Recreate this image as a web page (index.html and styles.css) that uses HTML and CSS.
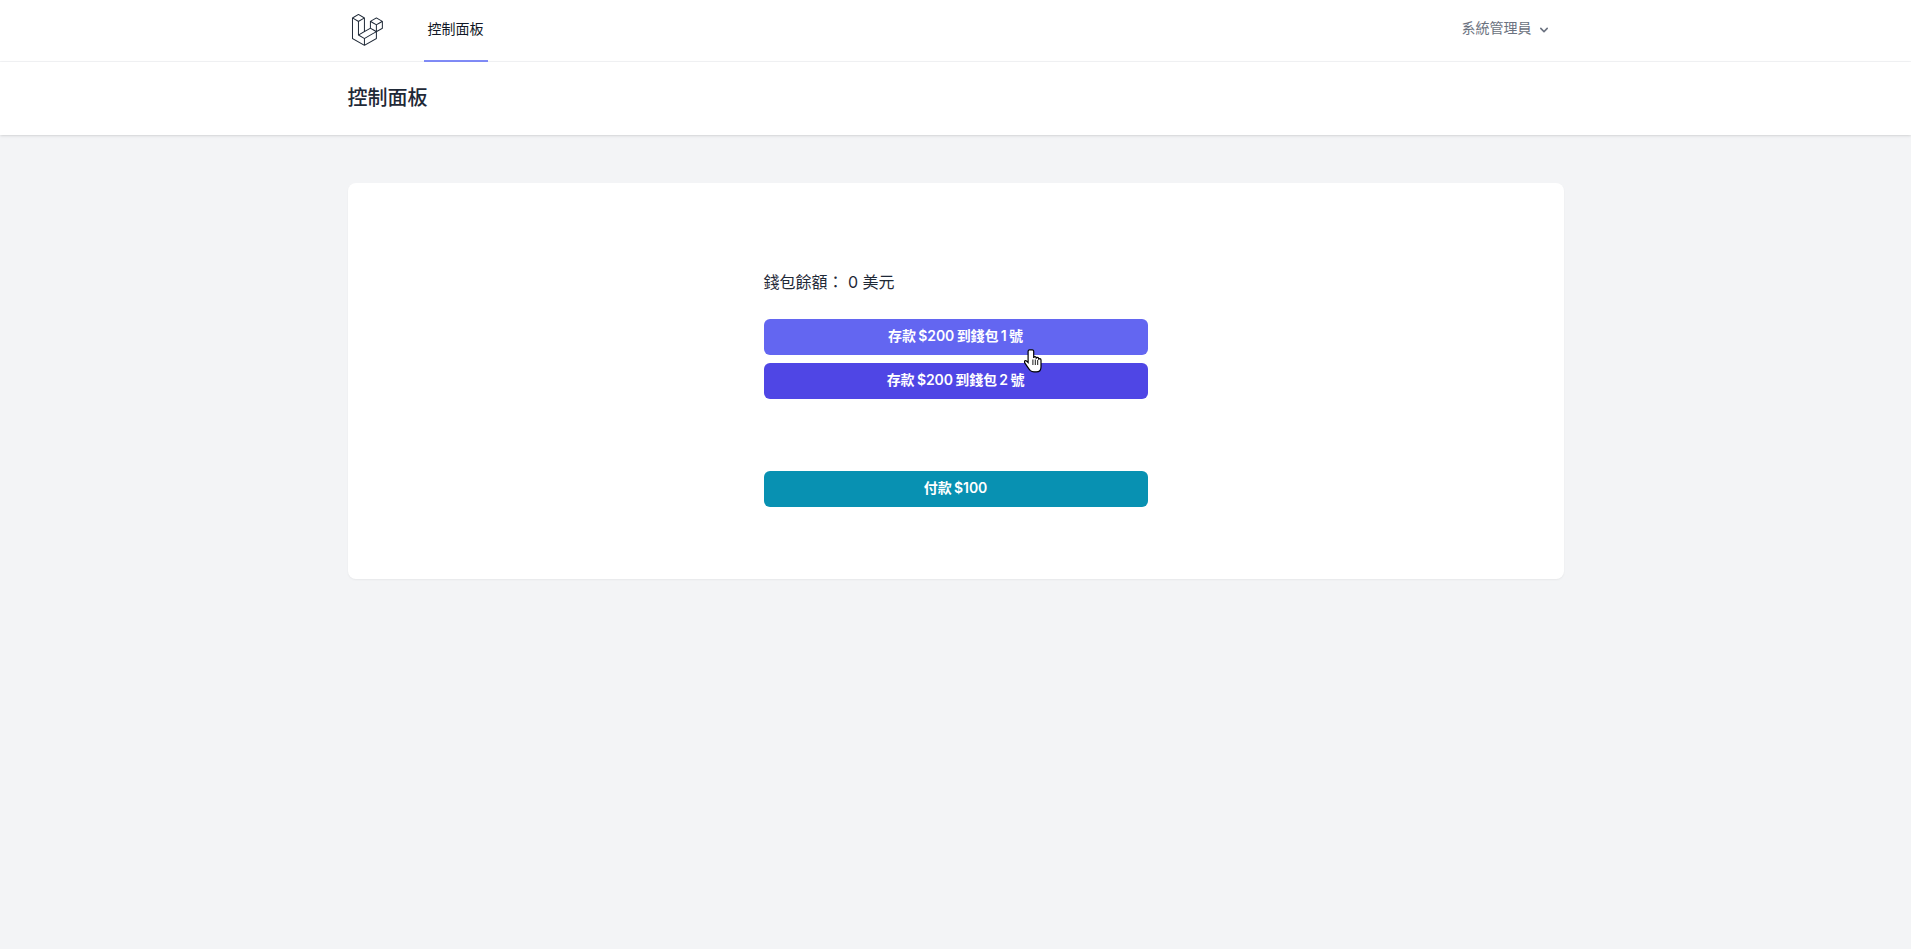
FILE: index.html
```html
<!DOCTYPE html>
<html lang="zh-Hant">
<head>
<meta charset="utf-8">
<title>控制面板</title>
<link rel="stylesheet" href="styles.css">
</head>
<body>
<div class="page">
  <nav class="nav">
    <div class="container nav-inner">
      <div class="nav-left">
        <svg class="logo" viewBox="0 0 316 316" xmlns="http://www.w3.org/2000/svg"><path d="M305.8 81.125C305.77 80.995 305.69 80.885 305.65 80.755C305.56 80.525 305.49 80.285 305.37 80.075C305.29 79.935 305.17 79.815 305.07 79.685C304.94 79.515 304.83 79.325 304.68 79.175C304.55 79.045 304.39 78.955 304.25 78.845C304.09 78.715 303.95 78.575 303.77 78.475L251.32 48.275C249.97 47.495 248.31 47.495 246.96 48.275L194.51 78.475C194.33 78.575 194.19 78.725 194.03 78.845C193.89 78.955 193.73 79.045 193.6 79.175C193.45 79.325 193.34 79.515 193.21 79.685C193.11 79.815 192.99 79.935 192.91 80.075C192.79 80.285 192.71 80.525 192.63 80.755C192.58 80.875 192.51 80.995 192.48 81.125C192.38 81.495 192.33 81.875 192.33 82.265V139.625L148.62 164.795V52.575C148.62 52.185 148.57 51.805 148.47 51.435C148.44 51.305 148.36 51.195 148.32 51.065C148.23 50.835 148.16 50.595 148.04 50.385C147.96 50.245 147.84 50.125 147.74 49.995C147.61 49.825 147.5 49.635 147.35 49.485C147.22 49.355 147.06 49.265 146.92 49.155C146.76 49.025 146.62 48.885 146.44 48.785L93.99 18.585C92.64 17.805 90.98 17.805 89.63 18.585L37.18 48.785C37 48.885 36.86 49.035 36.7 49.155C36.56 49.265 36.4 49.355 36.27 49.485C36.12 49.635 36.01 49.825 35.88 49.995C35.78 50.125 35.66 50.245 35.58 50.385C35.46 50.595 35.38 50.835 35.3 51.065C35.25 51.185 35.18 51.305 35.15 51.435C35.05 51.805 35 52.185 35 52.575V232.235C35 233.795 35.84 235.245 37.19 236.025L142.1 296.425C142.33 296.555 142.58 296.635 142.83 296.725C142.95 296.765 143.06 296.835 143.18 296.865C143.55 296.965 143.93 297.015 144.31 297.015C144.69 297.015 145.07 296.965 145.44 296.865C145.55 296.835 145.65 296.775 145.76 296.735C146.02 296.645 146.28 296.565 146.52 296.425L251.43 236.025C252.79 235.245 253.62 233.805 253.62 232.235V174.875L303.88 145.935C305.24 145.155 306.07 143.715 306.07 142.145V82.265C306.07 81.875 306.02 81.495 305.92 81.125H305.8ZM144.2 227.205L100.57 202.515L146.39 176.135L196.66 147.195L240.33 172.335L208.29 190.625L144.2 227.205ZM244.75 114.995V164.795L226.39 154.225L201.03 139.625V89.825L219.39 100.395L244.75 114.995ZM249.12 57.105L292.81 82.265L249.12 107.425L205.43 82.265L249.12 57.105ZM114.49 184.425L96.13 194.995V85.305L121.49 70.705L139.85 60.135V169.815L114.49 184.425ZM91.76 27.425L135.45 52.585L91.76 77.745L48.07 52.585L91.76 27.425ZM43.67 60.135L62.03 70.705L87.39 85.305V202.545V202.555V202.565C87.39 202.735 87.44 202.895 87.46 203.055C87.49 203.265 87.49 203.485 87.55 203.695V203.705C87.6 203.875 87.69 204.035 87.76 204.195C87.84 204.375 87.89 204.575 87.99 204.745C87.99 204.745 87.99 204.755 88 204.755C88.09 204.905 88.22 205.035 88.33 205.175C88.45 205.335 88.55 205.495 88.69 205.635L88.7 205.645C88.82 205.765 88.98 205.855 89.12 205.965C89.28 206.085 89.42 206.225 89.59 206.325C89.6 206.325 89.6 206.325 89.61 206.335C89.62 206.335 89.62 206.345 89.63 206.345L139.87 234.775V285.065L43.67 229.705V60.135ZM244.75 229.705L148.58 285.075V234.775L219.8 194.115L244.75 179.875V229.705ZM297.2 139.625L253.49 164.795V114.995L278.85 100.395L297.21 89.825V139.625H297.2Z"/></svg>
        <a class="nav-link">控制面板</a>
      </div>
      <div class="user">
        <span>系統管理員</span>
        <svg class="chevron" viewBox="0 0 20 20" xmlns="http://www.w3.org/2000/svg"><path fill-rule="evenodd" clip-rule="evenodd" d="M5.293 7.293a1 1 0 011.414 0L10 10.586l3.293-3.293a1 1 0 111.414 1.414l-4 4a1 1 0 01-1.414 0l-4-4a1 1 0 010-1.414z"/></svg>
      </div>
    </div>
  </nav>
  <header class="header">
    <div class="container">
      <h2 class="title">控制面板</h2>
    </div>
  </header>
  <main class="main">
    <div class="container">
      <div class="card">
        <div class="column">
          <p class="balance">錢包餘額： 0 美元</p>
          <div class="deposit-group">
            <button class="btn btn-hover">存款 $200 到錢包 1 號
              <svg class="cursor" viewBox="0 0 18 24" xmlns="http://www.w3.org/2000/svg"><path d="M5.4 .8c-.8 0-1.3.7-1.3 1.6v11.2l-1.4-1.4c-.8-.7-1.7-.6-2.1 0-.3.5-.2 1.1.2 1.7l3.2 4.7c.9 1.3 1.6 2.2 2.4 3 .8.7 1.8 1.2 3.6 1.2h2.4c2.8 0 4.6-2 4.6-4.9v-6.9c0-.9-.5-1.4-1.2-1.4-.6 0-1.1.4-1.2 1.1v-.9c0-.9-.5-1.4-1.2-1.4s-1.2.5-1.2 1.3v-.7c0-.9-.6-1.4-1.3-1.4s-1.2.5-1.2 1.3V2.4c0-.9-.6-1.6-1.3-1.6z" fill="#fff" stroke="#000" stroke-width="1.2"/><path d="M8.9 10.5v5.5M11.3 10.5v5.5M13.7 11v5" fill="none" stroke="#000" stroke-width=".9"/></svg>
            </button>
            <button class="btn btn-primary">存款 $200 到錢包 2 號</button>
          </div>
          <button class="btn btn-pay">付款 $100</button>
        </div>
      </div>
    </div>
  </main>
</div>
</body>
</html>
```
FILE: styles.css
```css
* { box-sizing: border-box; }
html, body { margin: 0; padding: 0; }
body {
  font-family: Inter, "Noto Sans CJK TC", sans-serif;
  background: #f3f4f6;
  color: #111827;
}
.page { min-height: 949px; background: #f3f4f6; }
.container { width: 1216px; margin: 0 auto; }
.nav { background: #fff; border-bottom: 1px solid #f3f4f6; height: 62px; }
.nav-inner { display: flex; justify-content: space-between; height: 61px; }
.nav-left { display: flex; align-items: flex-start; }
.logo { width: 36px; height: 36px; margin-top: 12px; fill: #1f2937; display: block; }
.nav-link {
  margin-left: 40px;
  height: 62px;
  padding: 0 4px 4px;
  border-bottom: 2px solid #818cf8;
  display: flex;
  align-items: center;
  font-size: 14px;
  color: #111827;
}
.user { display: flex; align-items: center; padding: 0 12px 7px 0; font-size: 14px; color: #6b7280; }
.chevron { width: 16px; height: 16px; margin: 6px 0 0 4px; fill: #6b7280; }
.header { background: #fff; box-shadow: 0 1px 3px rgba(0,0,0,.1), 0 1px 2px -1px rgba(0,0,0,.1); position: relative; }
.title { margin: 0; padding: 24px 0; font-size: 20px; line-height: 25px; font-weight: 500; color: #1f2937; }
.main { padding-top: 48px; }
.card {
  background: #fff;
  border-radius: 8px;
  box-shadow: 0 1px 2px rgba(0,0,0,.05);
  padding: 72px 0;
  display: flex;
  justify-content: center;
}
.column { width: 384px; display: flex; flex-direction: column; }
.balance { margin: 15px 0 25px; font-size: 16px; line-height: 24px; color: #1f2937; }
.deposit-group { display: flex; flex-direction: column; gap: 8px; margin-bottom: 72px; }
.btn {
  position: relative;
  display: block;
  width: 384px;
  height: 36px;
  border: 0;
  border-radius: 6px;
  padding: 0 0 5px;
  font-family: inherit;
  font-size: 14px;
  font-weight: 600;
  letter-spacing: -.1px;
  word-spacing: -1px;
  color: #fff;
  text-align: center;
}
.btn-hover { background: #6366f1; }
.btn-primary { background: #4f46e5; }
.btn-pay { background: #0891b2; }
.cursor { position: absolute; left: 260px; top: 30px; width: 18px; height: 24px; z-index: 2; }
```
